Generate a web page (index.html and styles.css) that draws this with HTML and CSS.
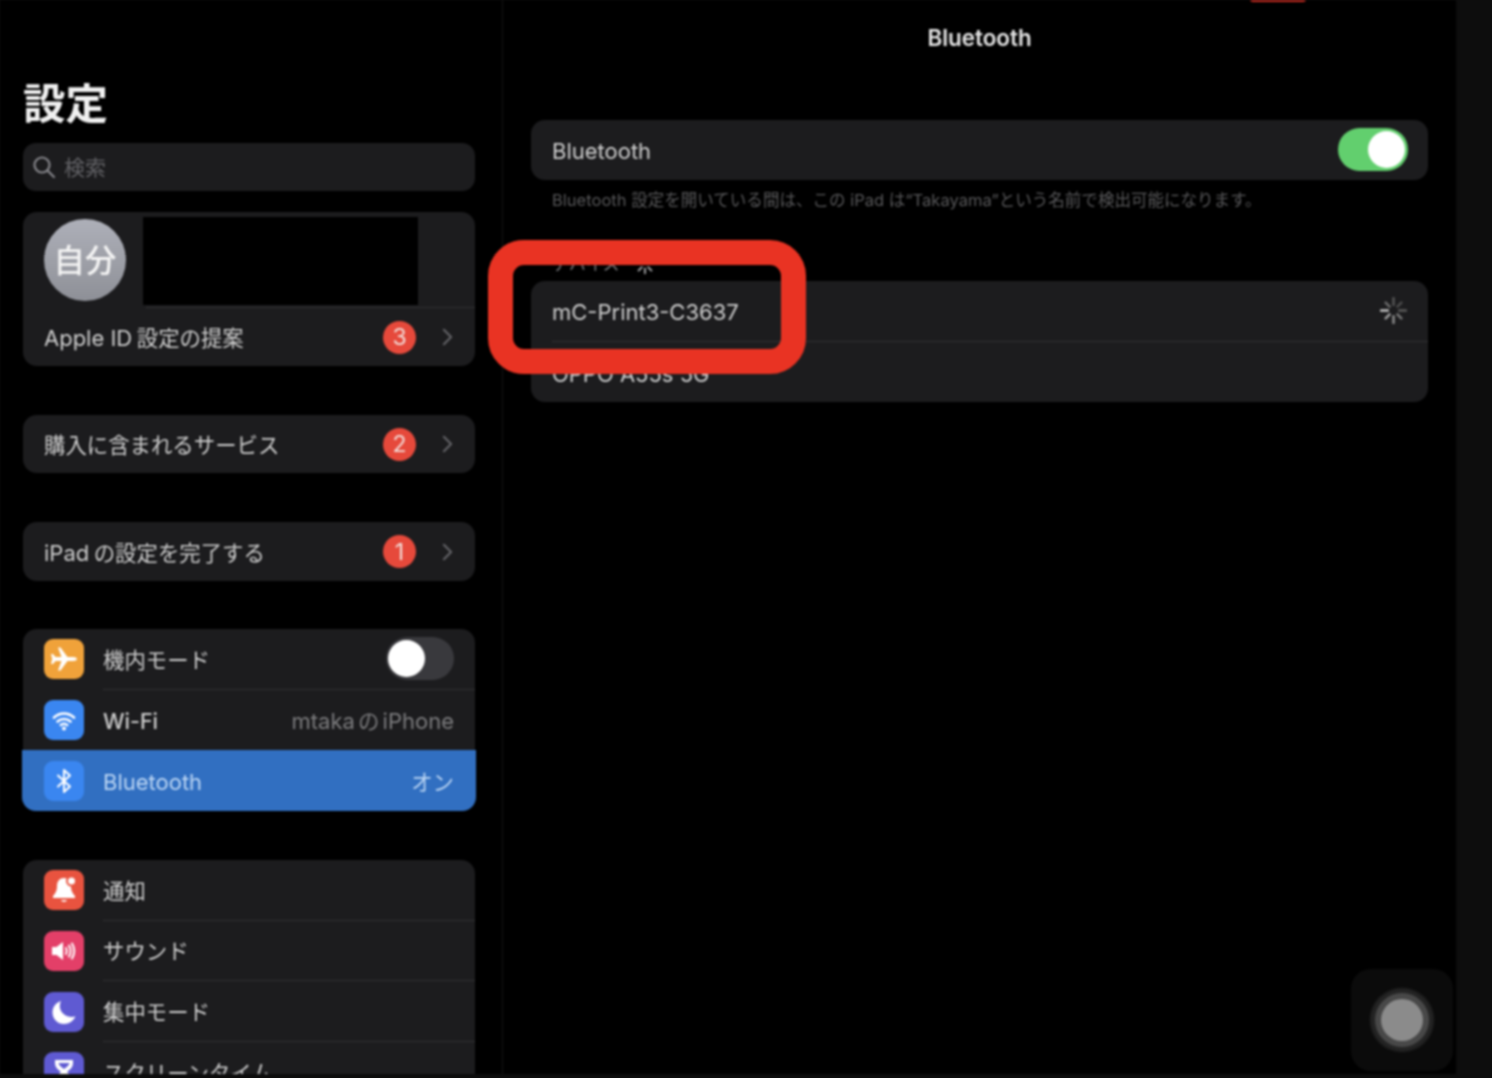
FILE: index.html
```html
<!DOCTYPE html>
<html lang="ja">
<head>
<meta charset="utf-8">
<title>設定</title>
<link rel="stylesheet" href="styles.css">
</head>
<body>
<div class="screen">
  <aside class="sidebar">
    <h1 class="title">設定</h1>
    <div class="search">
      <svg class="search-icon" viewBox="0 0 24 24"><circle cx="10" cy="10" r="7.5"/><path d="M15.5 15.5L22 22"/></svg>
      <span>検索</span>
    </div>
    <section class="card profile">
      <div class="profile-top">
        <div class="avatar">自分</div>
        <div class="redact"></div>
      </div>
      <div class="profile-sep"></div>
      <div class="row plain">
        <span class="label">Apple ID<span class="ja after">設定の提案</span></span>
        <span class="badge">3</span>
        <svg class="chev" viewBox="0 0 12 20"><path d="M2 2l8 8-8 8"/></svg>
      </div>
    </section>
    <section class="card gap49 short">
      <div class="row plain fill">
        <span class="label"><span class="ja">購入に含まれるサービス</span></span>
        <span class="badge">2</span>
        <svg class="chev" viewBox="0 0 12 20"><path d="M2 2l8 8-8 8"/></svg>
      </div>
    </section>
    <section class="card gap49 mid">
      <div class="row plain fill">
        <span class="label">iPad<span class="ja after">の設定を完了する</span></span>
        <span class="badge">1</span>
        <svg class="chev" viewBox="0 0 12 20"><path d="M2 2l8 8-8 8"/></svg>
      </div>
    </section>
    <section class="card gap48 group">
      <div class="row">
        <span class="icon orange"><svg viewBox="0 0 40 40"><path class="solid" d="M33 20c0-1.200-2-2-4-2h-5.500L16.500 8.500H14l3.500 9.500h-6L9 15H7l1.200 5L7 25h2l2.500-3h6L14 31.500h2.500L23.500 22H29c2 0 4-.8 4-2z"/></svg></span>
        <div class="body">
          <span class="label"><span class="ja">機内モード</span></span>
          <span class="switch off"><i></i></span>
        </div>
      </div>
      <div class="row">
        <span class="icon blue"><svg viewBox="0 0 40 40"><path class="line" d="M10 17.500c5.800-5.300 14.200-5.300 20 0M13.500 21.500c3.800-3.300 9.200-3.300 13 0M16.800 25c1.900-1.500 4.500-1.500 6.400 0"/><circle class="solid" cx="20" cy="28.500" r="2"/></svg></span>
        <div class="body nosep">
          <span class="label bold">Wi-Fi</span>
          <span class="value">mtaka <span class="ja">の</span> iPhone</span>
        </div>
      </div>
      <div class="row active">
        <span class="icon blue"><svg viewBox="0 0 40 40"><path class="line thin" d="M14 14.500l12 11-6 5.500V9l6 5.500-12 11"/></svg></span>
        <div class="body nosep">
          <span class="label">Bluetooth</span>
          <span class="value"><span class="ja">オン</span></span>
        </div>
      </div>
    </section>
    <section class="card gap49 last">
      <div class="row">
        <span class="icon red"><svg viewBox="0 0 40 40"><path class="solid" d="M20 8c-4.500 0-7 3.500-7 8 0 5-1.500 7-4 10v2h22v-2c-2.500-3-4-5-4-10 0-4.500-2.500-8-7-8z"/><path class="solid" d="M17 30h6c-.5 2.400-5.500 2.400-6 0z"/><circle class="cut" cx="27.500" cy="11" r="5.500"/><circle class="solid" cx="27.500" cy="11" r="3.500"/></svg></span>
        <div class="body"><span class="label"><span class="ja">通知</span></span></div>
      </div>
      <div class="row">
        <span class="icon pink"><svg viewBox="0 0 40 40"><path class="solid" d="M8 16h4.500L19 11v18l-6.500-5H8z"/><path class="line thin" d="M22 17c1 2 1 4 0 6M25 14.500c2 3.500 2 7.500 0 11M28 12.500c3 5 3 10 0 15"/></svg></span>
        <div class="body"><span class="label"><span class="ja">サウンド</span></span></div>
      </div>
      <div class="row">
        <span class="icon indigo"><svg viewBox="0 0 40 40"><path class="solid" d="M17 9c-5 1.500-8.500 6-8.500 11.500C8.500 27 13.500 32 20 32c5 0 9.500-3 11.500-7.500-7.500 2-14.500-2.500-15.500-8.500-.5-2.500 0-5 1-7z"/></svg></span>
        <div class="body"><span class="label"><span class="ja">集中モード</span></span></div>
      </div>
      <div class="row">
        <span class="icon indigo"><svg viewBox="0 0 40 40"><path class="solid" d="M11 8h18v3c0 5-4 7-6 9 2 2 6 4 6 9v3H11v-3c0-5 4-7 6-9-2-2-6-4-6-9z"/><path class="tint" d="M14.500 11h11c-.5 2.500-3.500 4.500-5.500 6-2-1.500-5-3.500-5.500-6z"/></svg></span>
        <div class="body"><span class="label"><span class="ja">スクリーンタイム</span></span></div>
      </div>
    </section>
  </aside>

  <main class="detail">
    <header class="nav">Bluetooth</header>
    <section class="card wide">
      <div class="row plain fill">
        <span class="label">Bluetooth</span>
        <span class="switch on"><i></i></span>
      </div>
    </section>
    <p class="note">Bluetooth 設定を開いている間は、この iPad は“Takayama”という名前で検出可能になります。</p>
    <div class="devices-head">
      <span>デバイス</span>
      <svg class="spinner small" viewBox="0 0 24 24"><path d="M12 2v5M12 17v5M2 12h5M17 12h5M5 5l3.500 3.500M15.500 15.500L19 19M5 19l3.500-3.500M15.500 8.500L19 5"/></svg>
    </div>
    <section class="card wide devices">
      <div class="row device">
        <div class="body">
          <span class="label">mC-Print3-C3637</span>
          <svg class="spinner" viewBox="0 0 24 24"><path class="s1" d="M12 1v6"/><path class="s2" d="M19 5l-3.500 3.500"/><path class="s3" d="M23 12h-6"/><path class="s4" d="M19 19l-3.500-3.500"/><path class="s5" d="M12 23v-6"/><path class="s6" d="M5 19l3.500-3.500"/><path class="s7" d="M1 12h6"/><path class="s8" d="M5 5l3.500 3.500"/></svg>
        </div>
      </div>
      <div class="row device">
        <div class="body nosep"><span class="label oppo">OPPO A55s 5G</span></div>
      </div>
    </section>
    <div class="callout"></div>
    <div class="rec-dot"></div>
    <div class="touch"><i></i></div>
  </main>
</div>
</body>
</html>
```

FILE: styles.css
```css
* { box-sizing: border-box; }

html, body {
  margin: 0;
  height: 100%;
  overflow: hidden;
  background: #0d0d0d;
}

body {
  font-family: Inter, "Noto Sans CJK JP", sans-serif;
  color: #cfcfcf;
  font-size: 22px;
}

.screen {
  display: flex;
  width: 1456px;
  height: 1074px;
  overflow: hidden;
  background: #000;
  filter: blur(0.8px);
}

.ja { font-size: 21.400px; }
.ja.after { margin-left: 4.500px; }

/* sidebar */
.sidebar {
  flex: 0 0 503px;
  height: 1074px;
  padding: 76px 27px 0 23px;
  border-right: 1px solid #141414;
  overflow: hidden;
}

.title {
  margin: 0;
  height: 54px;
  padding-top: 1px;
  line-height: 54px;
  font-size: 42.500px;
  font-weight: 700;
  color: #f0f0f0;
}

.search {
  display: flex;
  align-items: center;
  gap: 8px;
  height: 48px;
  margin-top: 13px;
  padding-left: 9px;
  border-radius: 13px;
  background: #1c1c1e;
  color: #626266;
  font-size: 21px;
  line-height: 28px;
}

.search span { padding-top: 2px; }

.search-icon {
  width: 24px;
  height: 24px;
  fill: none;
  stroke: #85858a;
  stroke-width: 2.200;
  stroke-linecap: round;
}

.card {
  border-radius: 14px;
  background: #1c1c1e;
}

.profile { margin-top: 21px; height: 154px; }
.gap49 { margin-top: 49px; }
.gap48 { margin-top: 48px; }
.short { height: 58px; }
.mid { height: 59px; }
.group { height: 182px; }
.last { border-radius: 14px 14px 0 0; }

.profile-top {
  display: flex;
  align-items: center;
  height: 95px;
  padding-left: 21px;
}

.avatar {
  display: flex;
  align-items: center;
  justify-content: center;
  width: 82px;
  height: 82px;
  padding-top: 3px;
  border-radius: 50%;
  background: linear-gradient(#aeb0b9, #8e9097);
  color: #f4f4f4;
  font-size: 31.500px;
  font-weight: 500;
  line-height: 40px;
}

.redact {
  width: 275px;
  height: 88px;
  margin-left: 17px;
  margin-top: 3px;
  background: #000;
}

.profile-sep {
  height: 1px;
  margin-left: 123px;
  background: #323234;
}

.row {
  display: flex;
  align-items: center;
  height: 60.670px;
  padding-left: 21px;
}

.row.plain {
  height: 58px;
  padding-right: 21px;
}

.row.plain.fill { height: 100%; }

.label {
  flex: 1 1 auto;
  padding-top: 2px;
  line-height: 26px;
  white-space: nowrap;
}

.oppo { padding-top: 4px; }
.bold { font-size: 21.500px; font-weight: 500; }

.badge {
  display: flex;
  align-items: center;
  justify-content: center;
  flex: none;
  width: 33px;
  height: 33px;
  margin-right: 26px;
  border-radius: 50%;
  background: #e6493b;
  color: #f2dcd8;
  font-size: 23px;
  line-height: 26px;
}

.chev {
  flex: none;
  width: 11px;
  height: 18px;
  margin-right: 1px;
  fill: none;
  stroke: #626266;
  stroke-width: 2.400;
  stroke-linecap: round;
  stroke-linejoin: round;
}

.icon {
  display: flex;
  flex: none;
  width: 40px;
  height: 40px;
  margin-right: 19px;
  border-radius: 9px;
}

.icon svg { width: 40px; height: 40px; }
.solid { fill: #fff; }
.line { fill: none; stroke: #fff; stroke-width: 2.600; stroke-linecap: round; stroke-linejoin: round; }
.line.thin { stroke-width: 2; }
.orange { background: #f0a23a; }
.blue { background: #3a86f0; }
.red { background: #e8533f; }
.pink { background: #e33f68; }
.indigo { background: #5f5ad2; }
.cut { fill: #e8533f; }
.tint { fill: #5f5ad2; }

.body {
  display: flex;
  flex: 1;
  align-items: center;
  height: 100%;
  padding-right: 21px;
  border-bottom: 1px solid #323234;
}

.nosep { border-bottom: 0; }

.value {
  flex: none;
  padding-top: 2px;
  color: #7c7c7e;
  line-height: 26px;
  word-spacing: -3px;
}

.active {
  margin: 0 -1px;
  padding-left: 22px;
  border-radius: 0 0 14px 14px;
  background: #316fc1;
  color: #bcd6f4;
}

.active .value { color: #bcd6f4; }
.active .body { padding-right: 22px; }

.switch {
  display: flex;
  flex: none;
  align-items: center;
  width: 70px;
  height: 43px;
  padding: 3px;
  border-radius: 22px;
}

.switch i {
  width: 37px;
  height: 37px;
  border-radius: 50%;
  background: #fff;
}

.switch.off { width: 68px; background: #39393d; padding-left: 2px; }
.switch.on { margin-top: -1px; background: #62cf6e; justify-content: flex-end; }

/* detail */
.detail {
  position: relative;
  flex: 1;
  padding: 0 28px;
}

.nav {
  height: 76px;
  line-height: 76px;
  text-align: center;
  color: #e6e6e6;
  font-size: 22.400px;
  font-weight: 600;
}

.wide {
  margin-top: 44px;
  height: 60px;
}

.wide .row.plain.fill { padding-right: 20px; }

.note {
  margin: 0;
  height: 41px;
  padding-left: 21px;
  line-height: 41px;
  font-size: 16.550px;
  color: #58585a;
  white-space: nowrap;
}

.devices-head {
  display: flex;
  align-items: center;
  gap: 14px;
  height: 60px;
  padding: 26px 0 0 21px;
  font-size: 17px;
  line-height: 22px;
  color: #77777a;
}

.devices {
  margin-top: 0;
  height: 121px;
}

.device { height: 60.500px; }

.spinner {
  flex: none;
  width: 27px;
  height: 27px;
  fill: none;
  stroke: #9a9a9c;
  stroke-width: 2.200;
  stroke-linecap: round;
}

.spinner.small { width: 22px; height: 22px; }
.s1 { stroke: #555; }
.s2 { stroke: #4c4c4c; }
.s3 { stroke: #5a5a5a; }
.s4 { stroke: #777; }
.s5 { stroke: #8c8c8c; }
.s6 { stroke: #a0a0a0; }
.s7 { stroke: #c4c4c4; }
.s8 { stroke: #6c6c6c; }

.callout {
  position: absolute;
  left: -15px;
  top: 240px;
  width: 318px;
  height: 134px;
  border: 25px solid #e93323;
  border-radius: 36px;
}

.rec-dot {
  position: absolute;
  left: 747px;
  top: -4px;
  width: 56px;
  height: 6px;
  border-radius: 3px;
  background: #c9291f;
}

.touch {
  position: absolute;
  left: 848px;
  top: 969px;
  display: flex;
  align-items: center;
  justify-content: center;
  width: 102px;
  height: 102px;
  border-radius: 20px;
  background: #0b0b0b;
}

.touch i {
  width: 42px;
  height: 42px;
  border-radius: 50%;
  background: #8b8b8b;
  box-shadow: 0 0 0 6px #484848, 0 0 2px 11px #242424;
}
```
